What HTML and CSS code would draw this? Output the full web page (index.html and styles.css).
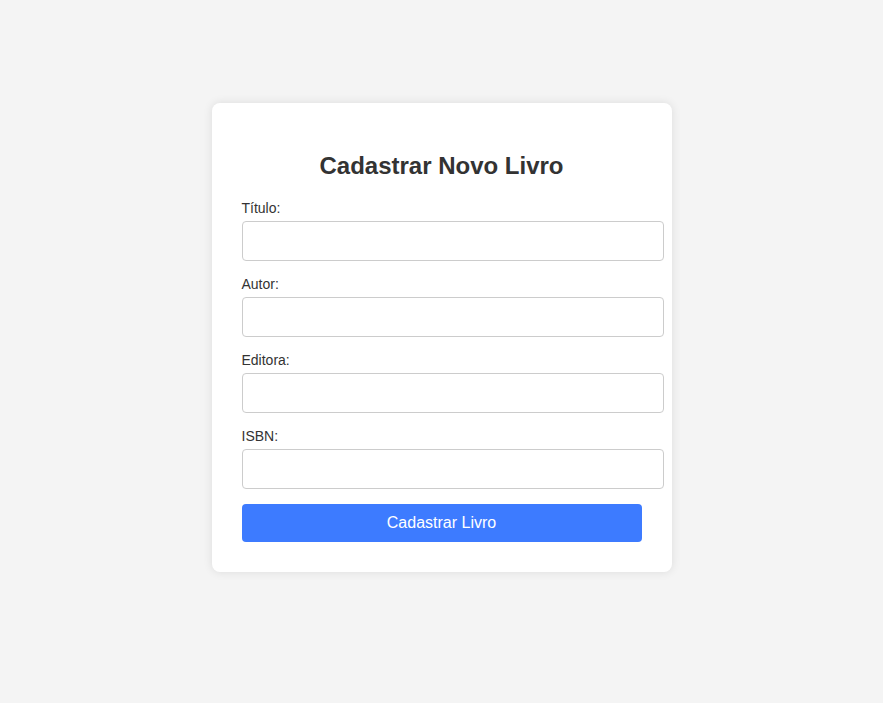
FILE: index.html
```html
<!DOCTYPE html>
<html lang="pt-BR">
<head>
<meta charset="UTF-8">
<title>Cadastrar Novo Livro</title>
<link rel="stylesheet" href="styles.css">
</head>
<body>
<div class="page">
  <div class="card">
    <h2 class="title">Cadastrar Novo Livro</h2>
    <form class="form">
      <label class="label" for="titulo">Título:</label>
      <input class="input" type="text" id="titulo">
      <label class="label" for="autor">Autor:</label>
      <input class="input" type="text" id="autor">
      <label class="label" for="editora">Editora:</label>
      <input class="input" type="text" id="editora">
      <label class="label" for="isbn">ISBN:</label>
      <input class="input" type="text" id="isbn">
      <button class="button" type="submit">Cadastrar Livro</button>
    </form>
  </div>
</div>
</body>
</html>
```
FILE: styles.css
```css
html, body {
  margin: 0;
  padding: 0;
}
body {
  background: #f4f4f4;
  font-family: "Liberation Sans", Arial, sans-serif;
  color: #333;
}
.page {
  height: 703px;
  box-sizing: border-box;
  padding-bottom: 28px;
  display: flex;
  align-items: center;
  justify-content: center;
}
.card {
  width: 400px;
  padding: 30px;
  background: #fff;
  border-radius: 8px;
  box-shadow: 0 0 10px rgba(0, 0, 0, 0.1);
}
.title {
  margin: 19px 0 20px;
  font-size: 24px;
  font-weight: bold;
  text-align: center;
  color: #333;
}
.form {
  margin: 0;
}
.label {
  display: block;
  font-size: 14px;
  line-height: 16px;
  margin-bottom: 5px;
  color: #333;
}
.input {
  display: block;
  width: 100%;
  box-sizing: content-box;
  height: 18px;
  padding: 10px;
  margin: 0 0 15px;
  border: 1px solid #ccc;
  border-radius: 4px;
  font-size: 16px;
  font-family: "Liberation Sans", Arial, sans-serif;
  background: #fff;
}
.button {
  display: block;
  width: 100%;
  height: 38px;
  padding: 10px;
  border: none;
  border-radius: 4px;
  background: #3d7bff;
  color: #fff;
  font-size: 16px;
  font-family: "Liberation Sans", Arial, sans-serif;
}
```
